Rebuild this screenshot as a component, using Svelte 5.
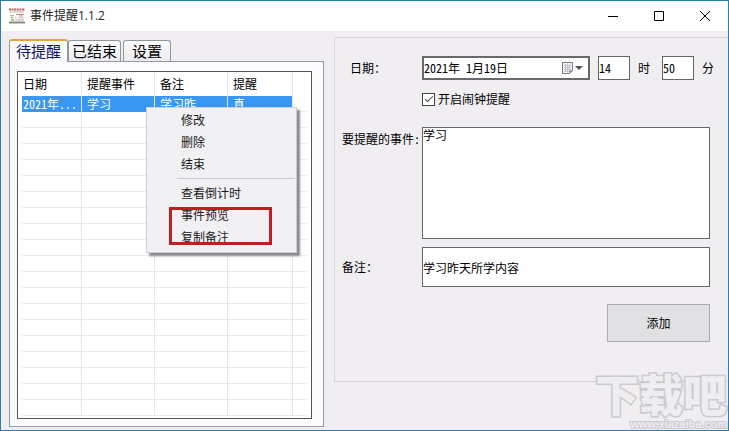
<script>
  const tabs = ['待提醒', '已结束', '设置'];
  const columns = ['日期', '提醒事件', '备注', '提醒'];
  const rows = [['2021年...', '学习', '学习昨', '真']];
  const emptyRows = Array(19).fill(0);
  const menu = [['修改', '删除', '结束'], ['查看倒计时', '事件预览', '复制备注']];

  let active = $state(0);
  let selected = $state(0);
  let date = $state('2021年 1月19日');
  let hour = $state('14');
  let minute = $state('50');
  let alarm = $state(true);
  let event = $state('学习');
  let remark = $state('学习昨天所学内容');
</script>

<div class="window">
  <header class="titlebar">
    <svg class="app-icon" width="16" height="16" viewBox="0 0 16 16" aria-hidden="true">
      <path d="M0 1.5h16" stroke="#b5605c" stroke-width="2" stroke-dasharray="2 .6" />
      <path d="M1 4h14M1 7.5h4M6 12h9" stroke="#b4b4aa" />
      <path d="M7 6.5h8M10 8h4" stroke="#c98480" />
      <path d="M1.5 9.5h3M2 12h3" stroke="#b3c793" stroke-width="2" />
      <path d="M7 8.5v3M9 10h6" stroke="#c6c6be" />
      <path d="M0 14.5h16" stroke="#8d8d84" stroke-width="2" />
    </svg>
    <h1>事件提醒1.1.2</h1>
    <div class="controls">
      <button aria-label="最小化"><svg width="10" height="10"><path d="M0 5.5h10" /></svg></button>
      <button aria-label="最大化"><svg width="10" height="10"><path d="M.5.5h9v9h-9z" /></svg></button>
      <button aria-label="关闭"><svg width="10" height="10"><path d="M0 0l10 10M10 0L0 10" /></svg></button>
    </div>
  </header>

  <main>
    <section class="left">
      <div class="tabs" role="tablist">
        {#each tabs as tab, i}
          <button class="tab" class:active={active === i} role="tab" aria-selected={active === i} onclick={() => (active = i)}>{tab}</button>
        {/each}
      </div>
      <div class="tab-panel" role="tabpanel">
        <div class="list">
          <table>
            <colgroup><col class="c-date" /><col class="c-event" /><col class="c-event" /><col class="c-flag" /><col /></colgroup>
            <thead>
              <tr>{#each columns as col}<th>{col}</th>{/each}<th></th></tr>
            </thead>
            <tbody>
              {#each rows as row, i}
                <tr class:selected={selected === i} onclick={() => (selected = i)}>
                  {#each row as cell}<td>{cell}</td>{/each}<td></td>
                </tr>
              {/each}
              {#each emptyRows as _}
                <tr><td></td><td></td><td></td><td></td><td></td></tr>
              {/each}
            </tbody>
          </table>
          <div class="menu" role="menu">
            {#each menu as group, i}
              {#if i > 0}<hr />{/if}
              {#each group as item}
                <button role="menuitem">{item}</button>
              {/each}
            {/each}
            <div class="mark"></div>
          </div>
        </div>
      </div>
    </section>

    <form class="editor" onsubmit={(e) => e.preventDefault()}>
      <label class="indent" for="date">日期：</label>
      <div class="when">
        <div class="date">
          <input id="date" bind:value={date} />
          <button type="button" aria-label="选择日期">
            <svg width="22" height="14" viewBox="0 0 22 14">
              <path d="M1.5 1.5h10v8l-3 3h-7z" fill="#f4f4f6" stroke="#77777c" />
              <path d="M3 4.5h7M3 6.5h7M3 8.5h7M3 10.5h5M4.5 3v8M6.5 3v8M8.5 3v7" stroke="#c4c4cc" />
              <path d="M11.5 9.5h-3v3z" fill="#77777c" />
              <path d="M14 5h8l-4 4z" fill="#505055" />
            </svg>
          </button>
        </div>
        <input id="hour" class="num" bind:value={hour} />
        <label for="hour">时</label>
        <input id="minute" class="num" bind:value={minute} />
        <label for="minute">分</label>
      </div>

      <label class="check"><input type="checkbox" bind:checked={alarm} />开启闹钟提醒</label>

      <label class="event-label" for="event">要提醒的事件:</label>
      <textarea id="event" bind:value={event}></textarea>

      <label for="remark">备注：</label>
      <input id="remark" class="remark" bind:value={remark} />

      <button class="add">添加</button>
    </form>
  </main>

  <div class="watermark" aria-hidden="true">
    <span class="wm-name">下载吧</span>
    <span class="wm-url">www.xiazaiba.com</span>
  </div>
</div>

<style>
  :global(body) { margin: 0; }
  .window {
    position: relative;
    box-sizing: border-box;
    min-height: 100vh;
    display: flex; flex-direction: column;
    overflow: hidden;
    border: 1px solid #2b7fb4;
    background: #f0eef1;
    color: #000;
    font: 12px/16px "Noto Sans Mono CJK SC", "Noto Sans CJK SC", sans-serif;
  }
  button, input, textarea {
    box-sizing: border-box;
    margin: 0; padding: 0;
    border-radius: 0;
    font: inherit; color: inherit;
  }

  .titlebar {
    display: flex; align-items: center;
    height: 30px;
    padding-left: 8px;
    background: #fff;
  }
  h1 {
    flex: 1;
    margin: 0 0 0 5px;
    font: 12px/16px "Open Sans", "Noto Sans CJK SC", sans-serif;
    color: #222;
  }
  .controls { display: flex; }
  .controls button {
    width: 46px; height: 30px;
    border: 0; background: none;
    display: flex; align-items: center; justify-content: center;
  }
  .controls path { fill: none; stroke: #000; }

  main { flex: 1; display: flex; gap: 10px; padding: 6px 0 3px 8px; }
  .left { flex: 0 0 315px; display: flex; flex-direction: column; }
  .tabs { display: flex; align-items: flex-end; height: 24px; }
  .tab {
    height: 21px;
    padding: 0 3px;
    border: 1px solid #8f979f; border-bottom: 0;
    border-radius: 3px 3px 0 0;
    background: linear-gradient(#fdfdfd, #ebeaee);
    font-size: 15px; line-height: 18px;
  }
  .tab:last-child { margin-left: 2px; padding: 0 8px; }
  .tab.active {
    z-index: 1;
    height: 23px;
    margin-bottom: -1px;
    padding: 0 6px 1px;
    border-top: 2px solid #e3a23c;
    background: #fbfafd;
    color: #11116a;
  }
  .tab-panel {
    flex: 1; display: flex;
    padding: 9px 11px 7px 7px;
    border: 1px solid #929aa3;
    background: #fbfafd;
  }
  .list {
    position: relative;
    flex: 1;
    padding: 0 4px;
    border: 1px solid #55555a;
    background: #fff;
  }
  table { width: 100%; table-layout: fixed; border-collapse: separate; border-spacing: 0; }
  .c-date { width: 60px; }
  .c-event { width: 73px; }
  .c-flag { width: 65px; }
  th, td {
    box-sizing: border-box;
    height: 16px;
    padding: 0 0 0 5px;
    border-right: 1px solid #e6e5e8;
    text-align: left; font-weight: 400; line-height: 15px;
    white-space: nowrap; overflow: hidden;
  }
  th { height: 24px; line-height: 24px; }
  td { border-bottom: 1px solid #ebeaed; }
  th:first-child, td:first-child { padding-left: 1px; }
  th:last-child, td:last-child { border-right: 0; }
  .selected td { background: #3797f3; color: #fff; border-bottom-color: #3797f3; }
  .selected td:last-child { background: none; border-bottom-color: #ebeaed; }

  .menu {
    position: absolute; left: 128px; top: 35px;
    box-sizing: border-box;
    width: 151px;
    padding: 1px 1px 4px;
    border: 1px solid #d0cfd3;
    background: #f1f0f3;
    box-shadow: 3px 3px 2px #8a8a8e;
  }
  .menu button {
    display: block;
    width: 100%; height: 22px;
    padding-left: 33px;
    border: 0; background: none;
    color: #1a1a1a;
    text-align: left; line-height: 22px;
  }
  hr { margin: 3px 0 3px 29px; border: 0; border-top: 1px solid #c9c8cc; }
  .mark {
    position: absolute; left: 22px; top: 99px;
    box-sizing: border-box;
    width: 103px; height: 38px;
    border: 3px solid #c01f22;
  }

  .editor {
    flex: 1;
    display: grid;
    grid-template-columns: 80px minmax(0, 1fr);
    grid-template-rows: 25px 31px 112px 40px 47px;
    row-gap: 8px;
    align-content: start; align-items: center;
    height: 345px;
    box-sizing: border-box;
    padding: 17px 18px 0 7px;
    border: 1px solid #d8d6da; border-right: 0;
  }
  .indent { padding-left: 8px; }
  .when { display: flex; align-items: center; gap: 8px; white-space: nowrap; }
  .when > * { flex-shrink: 0; }
  .date {
    display: flex; align-items: center;
    box-sizing: border-box;
    width: 168px; height: 24px;
    border: 2px solid #69696d;
    background: #fff;
  }
  .date input { flex: 1; min-width: 0; border: 0; background: none; }
  .date button { width: 27px; height: 20px; border: 0; background: none; display: flex; align-items: center; }
  .num, .remark, textarea { border: 1px solid #66666a; background: #fff; }
  .num { width: 32px; height: 24px; }
  .num + label { margin-right: 4px; }
  .check { grid-column: 2; align-self: start; height: 22px; display: flex; align-items: center; gap: 3px; }
  .check input {
    appearance: none;
    width: 13px; height: 13px;
    border: 1px solid #444;
    background: #fff;
    display: grid; place-items: center;
  }
  .check input:checked::before {
    content: "";
    width: 7px; height: 3px;
    border: solid #444; border-width: 0 0 1px 1px;
    transform: rotate(-45deg);
    margin-bottom: 2px;
  }
  .event-label { align-self: start; padding-top: 4px; white-space: nowrap; }
  textarea { width: 100%; height: 112px; resize: none; line-height: 14px; }
  .remark { width: 100%; height: 40px; }
  .add {
    grid-column: 2; justify-self: end; align-self: end;
    width: 103px; height: 38px;
    border: 1px solid #acabaf;
    background: #e1e0e3;
  }

  .watermark {
    position: absolute; right: 1px; bottom: 0;
    display: flex; flex-direction: column; align-items: flex-end; gap: 2px;
    color: #efedf0;
    paint-order: stroke fill;
    pointer-events: none;
  }
  .wm-name {
    font: 900 44px/46px "Noto Sans CJK SC", sans-serif;
    -webkit-text-stroke: 3px #cbcace;
  }
  .wm-url {
    font: 700 11px/12px "Liberation Sans", sans-serif;
    -webkit-text-stroke: 2px #cbcace;
  }
</style>
